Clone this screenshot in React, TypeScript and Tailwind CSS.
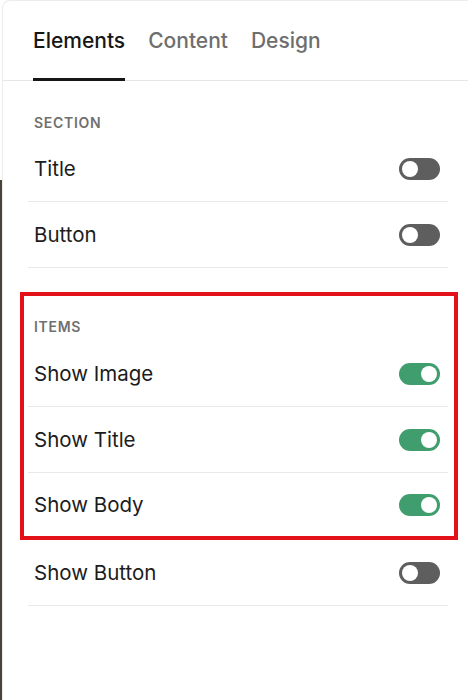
import { useState } from "react";

type Item = { id: string; label: string; on: boolean };

const sectionItems: Item[] = [
  { id: "title", label: "Title", on: false },
  { id: "button", label: "Button", on: false },
];

const itemItems: Item[] = [
  { id: "image", label: "Show Image", on: true },
  { id: "itemTitle", label: "Show Title", on: true },
  { id: "body", label: "Show Body", on: true },
];

function Toggle({ on, onClick }: { on: boolean; onClick: () => void }) {
  return (
    <button
      type="button"
      onClick={onClick}
      className={`relative flex h-[22px] w-[41px] shrink-0 items-center rounded-full px-[3px] ${
        on ? "justify-end bg-[#3f9d6e]" : "justify-start bg-[#5e5e5e]"
      }`}
    >
      <span className="block h-[16px] w-[16px] rounded-full bg-white" />
    </button>
  );
}

function Row({
  label,
  on,
  onToggle,
  last = false,
}: {
  label: string;
  on: boolean;
  onToggle: () => void;
  last?: boolean;
}) {
  return (
    <div
      className={`flex items-center justify-between pl-[6px] pr-[8px] ${
        last ? "h-[63px]" : "h-[66px] border-b border-[#e9e9e9]"
      }`}
    >
      <span className="text-[20.5px] leading-7 text-[#1c1c1c]">{label}</span>
      <Toggle on={on} onClick={onToggle} />
    </div>
  );
}

export default function App() {
  const [tab, setTab] = useState("Elements");
  const [state, setState] = useState<Record<string, boolean>>({
    title: false,
    button: false,
    image: true,
    itemTitle: true,
    body: true,
    showButton: false,
  });

  const flip = (id: string) => setState((s) => ({ ...s, [id]: !s[id] }));

  return (
    <div className="flex min-h-screen bg-white font-['Inter','Liberation_Sans',sans-serif]">
      {/* editor canvas peeking out on the left */}
      <div className="mt-[180px] w-[2px] shrink-0 bg-[#4a4236]" />

      <div className="flex-1 rounded-tl-lg border-l border-t border-[#ececec] bg-white">
        {/* tabs */}
        <div className="flex gap-[23px] border-b border-[#e6e6e6] px-[30px]">
          {["Elements", "Content", "Design"].map((t) => (
            <button
              key={t}
              type="button"
              onClick={() => setTab(t)}
              className={`-mb-px pt-[26px] pb-[23px] text-[21px] font-medium leading-7 border-b-[3px] ${
                tab === t
                  ? "border-[#161616] text-[#161616]"
                  : "border-transparent text-[#6e6e6e]"
              }`}
            >
              {t}
            </button>
          ))}
        </div>

        <div className="pl-[25px] pr-[20px] pt-[34px]">
          <div className="mb-[5px] pl-[6px] text-[14px] font-semibold leading-4 tracking-[0.05em] text-[#707070]">
            SECTION
          </div>
          {sectionItems.map((it) => (
            <Row key={it.id} label={it.label} on={state[it.id]} onToggle={() => flip(it.id)} />
          ))}

          {/* highlighted group */}
          <div className="-ml-[8px] -mr-[10px] mt-[24px] border-4 border-[#e2111a] pl-[4px] pr-[6px] pt-[23px]">
            <div className="mb-[6px] pl-[6px] text-[14px] font-semibold leading-4 tracking-[0.05em] text-[#707070]">
              ITEMS
            </div>
            {itemItems.map((it, i) => (
              <Row
                key={it.id}
                label={it.label}
                on={state[it.id]}
                onToggle={() => flip(it.id)}
                last={i === itemItems.length - 1}
              />
            ))}
          </div>

          <Row label="Show Button" on={state.showButton} onToggle={() => flip("showButton")} />
        </div>
      </div>
    </div>
  );
}
